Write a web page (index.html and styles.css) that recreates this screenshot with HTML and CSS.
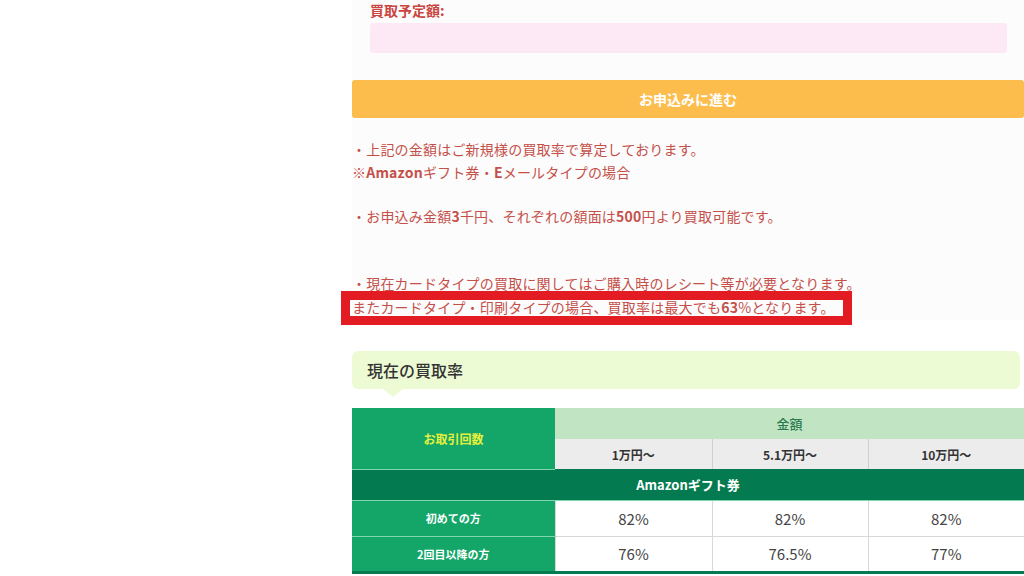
FILE: index.html
```html
<!DOCTYPE html>
<html lang="ja">
<head>
<meta charset="utf-8">
<title>買取率</title>
<link rel="stylesheet" href="styles.css">
</head>
<body>
<div class="page">
  <div class="panel">
    <div class="label">買取予定額:</div>
    <div class="amount"></div>
    <div class="btn">お申込みに進む</div>
    <p class="note n1">・上記の金額はご新規様の買取率で算定しております。<br>※<b>Amazon</b>ギフト券・<b>E</b>メールタイプの場合</p>
    <p class="note n2">・お申込み金額<b>3</b>千円、それぞれの額面は<b>500</b>円より買取可能です。</p>
    <p class="note n3">・現在カードタイプの買取に関してはご購入時のレシート等が必要となります。<br><span class="mark">またカードタイプ・印刷タイプの場合、買取率は最大でも<b>63</b>%となります。</span></p>
  </div>
  <div class="heading">現在の買取率</div>
  <table class="rates">
    <colgroup><col class="c1"><col class="c2"><col class="c3"><col class="c4"></colgroup>
    <tr class="r1">
      <th rowspan="2" class="count">お取引回数</th>
      <th colspan="3" class="amt">金額</th>
    </tr>
    <tr class="r2">
      <th class="tier">1万円〜</th>
      <th class="tier">5.1万円〜</th>
      <th class="tier">10万円〜</th>
    </tr>
    <tr class="r3">
      <th colspan="4" class="kind">Amazonギフト券</th>
    </tr>
    <tr class="r4">
      <th class="who">初めての方</th>
      <td>82%</td><td>82%</td><td>82%</td>
    </tr>
    <tr class="r5">
      <th class="who">2回目以降の方</th>
      <td>76%</td><td>76.5%</td><td>77%</td>
    </tr>
  </table>
</div>
</body>
</html>
```
FILE: styles.css
```css
html, body {
  margin: 0;
  padding: 0;
  background: #ffffff;
  font-family: "Noto Sans CJK JP", "Noto Sans", sans-serif;
}
.page {
  margin-left: 352px;
  width: 672px;
}
.panel {
  background: #fcfcfc;
  display: flow-root;
  padding-bottom: 1px;
}
.label {
  margin-left: 18px;
  font-size: 14px;
  line-height: 20px;
  font-weight: 700;
  color: #c9453f;
}
.amount {
  margin: 3px 17px 0 18px;
  height: 30px;
  background: #fde9f6;
  border-radius: 3px;
}
.btn {
  margin-top: 27px;
  height: 38px;
  line-height: 38px;
  background: #fdbd4d;
  border-radius: 3px;
  color: #ffffff;
  font-weight: 700;
  font-size: 14px;
  text-align: center;
}
.note {
  margin: 0;
  font-size: 14px;
  line-height: 23px;
  letter-spacing: 0.2px;
  color: #c5504a;
  white-space: nowrap;
}
.note b { font-weight: 700; }
.n1 { margin-top: 20px; }
.n2 { margin-top: 21px; }
.n3 { margin-top: 43px; line-height: 24px; }
.mark {
  position: relative;
  display: inline-block;
}
.mark::after {
  content: "";
  position: absolute;
  left: -11px;
  top: -4px;
  width: 493px;
  height: 16px;
  border: 9px solid #e31c23;
}
.heading {
  position: relative;
  margin-top: 31px;
  width: 668px;
  height: 38px;
  line-height: 38px;
  box-sizing: border-box;
  padding-left: 15px;
  background: #edfbd5;
  border-radius: 6px;
  font-size: 16px;
  font-weight: 500;
  color: #333333;
}
.heading::after {
  content: "";
  position: absolute;
  left: 31px;
  top: 38px;
  border-left: 10px solid transparent;
  border-right: 10px solid transparent;
  border-top: 8px solid #edfbd5;
}
.rates {
  margin-top: 19px;
  width: 672px;
  border-collapse: collapse;
  table-layout: fixed;
  border-bottom: 3px solid #037a50;
}
.c1 { width: 203px; }
.c2 { width: 157px; }
.c3 { width: 156px; }
.c4 { width: 156px; }
.rates th, .rates td {
  padding: 0;
  text-align: center;
  vertical-align: middle;
}
.r1 { height: 31px; }
.r2 { height: 30px; }
.r3 { height: 31px; }
.r4 { height: 36px; }
.r5 { height: 36px; }
.count {
  background: #13a668;
  color: #e8f03c;
  font-size: 12px;
  font-weight: 700;
  border-bottom: 1px solid #7fd5ac;
}
.amt {
  background: #c1e4c3;
  color: #2a7a50;
  font-size: 13px;
  font-weight: 500;
}
.tier {
  background: #ececec;
  color: #333333;
  font-size: 12px;
  font-weight: 700;
  border-left: 1px solid #d0d0d0;
}
.r2 .tier:first-child { border-left: none; }
.kind {
  background: #037a50;
  color: #ffffff;
  font-size: 13px;
  font-weight: 700;
  border-bottom: 1px solid #7fd5ac;
}
.who {
  background: #13a668;
  color: #ffffff;
  font-size: 11px;
  font-weight: 700;
  border-bottom: 1px solid #7fd5ac;
}
.r5 .who { border-bottom: none; }
.rates td {
  background: #ffffff;
  color: #444444;
  font-size: 15px;
  font-weight: 400;
  border-left: 1px solid #d8d8d8;
  border-bottom: 1px solid #d8d8d8;
}
.r5 td { border-bottom: none; }
```
